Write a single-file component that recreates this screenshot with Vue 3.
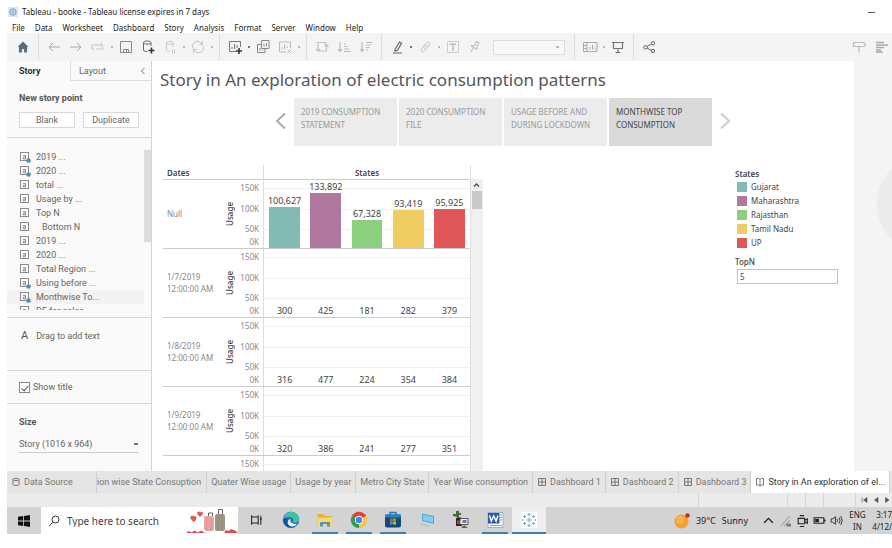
<script setup>
import { ref } from 'vue'

const menus = ['File', 'Data', 'Worksheet', 'Dashboard', 'Story', 'Analysis', 'Format', 'Server', 'Window', 'Help']

const sheets = [
  { name: '2019 ...', used: true },
  { name: '2020 ...', used: true },
  { name: 'total ...' },
  { name: 'Usage by ...' },
  { name: 'Top N' },
  { name: 'Bottom N', indent: true },
  { name: '2019 ...' },
  { name: '2020 ...' },
  { name: 'Total Region ...' },
  { name: 'Using before ...', used: true },
  { name: 'Monthwise To...', used: true },
  { name: 'DF for sales' },
]

const points = ['2019 CONSUMPTION STATEMENT', '2020 CONSUMPTION FILE', 'USAGE BEFORE AND DURING LOCKDOWN', 'MONTHWISE TOP CONSUMPTION']
const activePoint = ref(3)

const states = [
  { name: 'Gujarat', color: '#84bab4' },
  { name: 'Maharashtra', color: '#b0779f' },
  { name: 'Rajasthan', color: '#8bd07e' },
  { name: 'Tamil Nadu', color: '#f0cd63' },
  { name: 'UP', color: '#e05759' },
]

const rows = [
  { date: ['Null'], values: [100627, 133892, 67328, 93419, 95925] },
  { date: ['1/7/2019', '12:00:00 AM'], values: [300, 425, 181, 282, 379] },
  { date: ['1/8/2019', '12:00:00 AM'], values: [316, 477, 224, 354, 384] },
  { date: ['1/9/2019', '12:00:00 AM'], values: [320, 386, 241, 277, 351] },
  { date: [], values: [] },
]
const ticks = ['150K', '100K', '50K', '0K']
const AXIS_MAX = 166000
const barHeight = (v) => (v / AXIS_MAX) * 100 + '%'

const topN = ref('5')
const showTitle = ref(true)

const tabs = [
  { name: 'ion wise State Consuption', cut: true },
  { name: 'Quater Wise usage' },
  { name: 'Usage by year' },
  { name: 'Metro City State' },
  { name: 'Year Wise consumption' },
  { name: 'Dashboard 1', icon: 'grid' },
  { name: 'Dashboard 2', icon: 'grid' },
  { name: 'Dashboard 3', icon: 'grid' },
  { name: 'Story in An exploration of el...', icon: 'book', active: true },
]
</script>

<template>
  <div class="app">
    <header class="titlebar">
      <svg class="logo" viewBox="0 0 10 10"><rect width="10" height="10" fill="#dbe8f2" /><circle cx="5" cy="5" r="3.2" fill="none" stroke="#6f9cc0" /><path d="M5 2.500v5M2.500 5h5" stroke="#8fb2cd" /></svg>
      <span>Tableau - booke - Tableau license expires in 7 days</span>
      <button class="minimize" aria-label="Minimize"></button>
    </header>

    <nav class="menu">
      <button v-for="m in menus" :key="m">{{ m }}</button>
    </nav>

    <div class="toolbar">
      <button class="tool" aria-label="Start page"><svg viewBox="0 0 16 16"><path d="M8 2.500 2.500 8h1.400v5.500h3v-3.500h2.200v3.500h3V8h1.400z" fill="#5b6b7a" /></svg></button>
      <i class="sep"></i>
      <button class="tool" aria-label="Undo"><svg viewBox="0 0 16 16"><path d="M14 8H3M7 4 3 8l4 4" stroke="#aaa" /></svg></button>
      <button class="tool" aria-label="Redo"><svg viewBox="0 0 16 16"><path d="M2 8h11M9 4l4 4-4 4" stroke="#aaa" /></svg></button>
      <button class="tool" aria-label="Replay"><svg viewBox="0 0 16 16"><path d="M4 10H2V6h11M11 4l2 2-2 2M6 10h7V8" stroke="#c4c4c4" /></svg></button>
      <i class="caret"></i>
      <button class="tool" aria-label="Save"><svg viewBox="0 0 16 16"><path d="M2.500 2.500h11v11h-11zM5.500 13.500v-3h5v3M8.500 11v2" stroke="#888" /></svg></button>
      <button class="tool" aria-label="New data source"><svg viewBox="0 0 16 16"><path d="M11 7V3.500C11 1.500 3.500 1.500 3.500 3.500V11c0 1 1.500 1.500 4 1.500M3.500 4c0 1.500 7.500 1.500 7.500 0" stroke="#666" /><path d="M11.500 8.500v6M8.500 11.500h6" stroke="#333" stroke-width="1.600" /></svg></button>
      <button class="tool" aria-label="Pause updates"><svg viewBox="0 0 16 16"><path d="M11 8V3.500C11 2 4.500 2 4.500 3.500V11c0 1 1.500 1.500 3.500 1.500M4.500 4c0 1.500 6.500 1.500 6.500 0M10.500 10.500v4M12.500 10.500v4" stroke="#c8c8c8" /></svg></button>
      <i class="caret"></i>
      <button class="tool" aria-label="Refresh"><svg viewBox="0 0 16 16"><path d="M3 9.500A5 5 0 0 1 12 5M13 6.500A5 5 0 0 1 4 11M12.500 2.500V5.500h-3M3.500 13.500v-3h3" stroke="#c4c4c4" /></svg></button>
      <i class="caret"></i>
      <i class="sep"></i>
      <button class="tool" aria-label="New worksheet"><svg viewBox="0 0 16 16"><path d="M9 12.500H2.500v-10h11V8M5 10V8M7.500 10V5M10 9V6" stroke="#777" /><path d="M12 9v6M9 12h6" stroke="#333" stroke-width="1.600" /></svg></button>
      <i class="caret dark"></i>
      <button class="tool" aria-label="Duplicate"><svg viewBox="0 0 16 16"><path d="M6.500 1.500h7.500v8H6.500zM6 5.500H2.500v8h7.500v-4M9 7.500V5M11.500 7.500V4M5 11.500V9M7.500 11.500v-1" stroke="#888" /></svg></button>
      <button class="tool" aria-label="Clear sheet"><svg viewBox="0 0 16 16"><path d="M9 13H2.500V3h11v6M5 10.500V8M7.500 10.500V5.500M10 9V7M10.500 10.500l4 4M14.500 10.500l-4 4" stroke="#bbb" /></svg></button>
      <i class="caret"></i>
      <i class="sep"></i>
      <button class="tool" aria-label="Swap"><svg viewBox="0 0 16 16"><path d="M4 12V3.500h7.500v2M12.500 6v6H4M2.500 3.500H4M2 10l2 2 2-2M10.500 7.500l2-2 2 2" stroke="#c2c2c2" stroke-width="1.200" /></svg></button>
      <button class="tool" aria-label="Sort ascending"><svg viewBox="0 0 16 16"><path d="M4 3v9M2 10l2 2.500L6 10M8 12.500h6.500M8 10h5M8 7.500h3.500M8 5h2" stroke="#bcbcbc" stroke-width="1.200" /></svg></button>
      <button class="tool" aria-label="Sort descending"><svg viewBox="0 0 16 16"><path d="M4 3v9M2 10l2 2.500L6 10M8 3.500h6.500M8 6h5M8 8.500h3.500M8 11h2" stroke="#bcbcbc" stroke-width="1.200" /></svg></button>
      <i class="sep"></i>
      <button class="tool" aria-label="Highlight"><svg viewBox="0 0 16 16"><path d="M6 10.500 10.500 3l2 1.200-4 7L6 12zM4 14h9" stroke="#666" stroke-width="1.200" /></svg></button>
      <i class="caret dark"></i>
      <button class="tool" aria-label="Group"><svg viewBox="0 0 16 16"><path d="M5 9l4.500-5c2-2 4.500 0 3 2L7.500 12c-1.500 1.800-4.500 0-3-2L9 5M7 10l3.500-4" stroke="#c6c6c6" /></svg></button>
      <i class="caret"></i>
      <button class="tool" aria-label="Show labels"><svg viewBox="0 0 16 16"><path d="M2.500 2.500h11v11h-11z" stroke="#ccc" /><path d="M5.500 6V5h5v1M8 5v6M7 11h2" stroke="#aaa" /></svg></button>
      <button class="tool" aria-label="Pin"><svg viewBox="0 0 16 16"><path d="M8.500 2.500l4 1.200M9.500 3 8 6.500l-4 .5 6 3.500 0-3L12 4M6.500 8.500 4 13" stroke="#b4b4b4" /></svg></button>
      <select class="fit" aria-label="Fit"><option></option></select>
      <i class="sep"></i>
      <button class="tool" aria-label="Show cards"><svg viewBox="0 0 16 16"><path d="M1.500 3.500h13.500v9H1.500zM5 3.500v9M1.500 6.500H5M1.500 9.500H5M8 10.500V8M10.500 10.500V6M13 10.500V8.500" stroke="#aaa" /></svg></button>
      <i class="caret"></i>
      <button class="tool" aria-label="Presentation mode"><svg viewBox="0 0 16 16"><path d="M2 3.500h12M3.500 3.500v6h9v-6M8 9.500v4M5.500 13.500h5" stroke="#777" stroke-width="1.200" /></svg></button>
      <i class="sep"></i>
      <button class="tool" aria-label="Share"><svg viewBox="0 0 16 16"><path d="M6 7.500 10.500 5M6 9l4.500 2.500" stroke="#666" /><circle cx="4.500" cy="8.300" r="1.800" stroke="#666" /><circle cx="12" cy="4.300" r="1.700" stroke="#666" /><circle cx="12" cy="12" r="1.700" stroke="#666" /></svg></button>
      <span class="grow"></span>
      <button class="tool" aria-label="Data guide"><svg viewBox="0 0 16 16"><path d="M4 3.500h9l1.500 2-1.500 2H2.500v-4zM8 7.500v6" stroke="#bbb" stroke-width="1.200" /></svg></button>
      <button class="tool" aria-label="Show me"><svg viewBox="0 0 16 16"><path d="M3 3.500h8M3 6h12M3 8.500h8M3 11h5M3 13h7" stroke="#aaa" stroke-width="1.500" /></svg></button>
    </div>

    <main class="main">
      <aside class="panel">
        <div class="panel-tabs">
          <button class="ptab on">Story</button>
          <button class="ptab">Layout <svg viewBox="0 0 6 8"><path d="M4.500 1 1.500 4l3 3" fill="none" stroke="#777" /></svg></button>
        </div>
        <section class="new-point">
          <h2>New story point</h2>
          <div class="pair">
            <button>Blank</button>
            <button>Duplicate</button>
          </div>
        </section>
        <section class="sheet-section">
          <ul class="sheets">
            <li v-for="(s, i) in sheets" :key="i" :class="{ hot: i === 10 }">
              <svg viewBox="0 0 12 12">
                <rect x="1.500" y="1.500" width="8" height="8" fill="#fff" stroke="#8a8a8a" />
                <path d="M4 4.500h2.500V8H4.200V6.200h2.300" fill="none" stroke="#777" stroke-width=".8" />
                <circle v-if="s.used" cx="9.500" cy="9.500" r="2.300" fill="#4a8fb0" />
              </svg>
              <span :class="{ indent: s.indent }">{{ s.name }}</span>
            </li>
          </ul>
          <div class="thumb"></div>
        </section>
        <section class="drag"><b>A</b><span>Drag to add text</span></section>
        <section class="show">
          <label><input v-model="showTitle" type="checkbox" /><span>Show title</span></label>
        </section>
        <section class="size">
          <h2><label for="size">Size</label></h2>
          <select id="size"><option>Story (1016 x 964)</option></select>
        </section>
      </aside>

      <article class="story">
        <h1>Story in An exploration of electric consumption patterns</h1>
        <nav class="points">
          <button class="arrow" aria-label="Previous"><svg viewBox="0 0 12 18"><path d="M10 1.500 2 9l8 7.500" stroke="#aaa" /></svg></button>
          <button v-for="(p, i) in points" :key="p" class="point" :class="{ on: i === activePoint }" @click="activePoint = i">{{ p }}</button>
          <button class="arrow" aria-label="Next"><svg viewBox="0 0 12 18"><path d="M2 1.500 10 9l-8 7.500" stroke="#ccc" /></svg></button>
        </nav>
        <div class="board">
          <div class="viz">
            <div class="chart">
              <div class="head"><b>Dates</b><b class="cols">States</b></div>
              <div v-for="(r, i) in rows" :key="i" class="row">
                <div class="date"><span v-for="d in r.date" :key="d">{{ d }}</span></div>
                <div class="axis-name"><span v-if="r.values.length">Usage</span></div>
                <div class="ticks"><span v-for="t in ticks.slice(0, r.values.length ? 4 : 1)" :key="t">{{ t }}</span></div>
                <div class="plot">
                  <div v-for="(v, j) in r.values" :key="j" class="cell">
                    <span>{{ v.toLocaleString('en-US') }}</span>
                    <div class="bar" :style="{ height: barHeight(v), background: v > 1000 ? states[j].color : 'transparent' }"></div>
                  </div>
                </div>
              </div>
            </div>
            <div class="vscroll"><svg viewBox="0 0 11 11"><path d="M3 7l2.500-2.500L8 7" fill="none" stroke="#555" stroke-width="1.500" /></svg><div></div></div>
          </div>
          <div class="legend">
            <b>States</b>
            <ul>
              <li v-for="s in states" :key="s.name"><i :style="{ background: s.color }"></i>{{ s.name }}</li>
            </ul>
            <label for="topn">TopN</label>
            <input id="topn" v-model="topN" type="text" />
          </div>
        </div>
      </article>
      <div class="gutter"><div class="bubble"></div></div>
    </main>

    <nav class="tabs">
      <button class="tab source"><svg viewBox="0 0 10 10"><path d="M2 2.500C2 1 8 1 8 2.500v5C8 9 2 9 2 7.500zC2 4 8 4 8 2.500" /></svg>Data Source</button>
      <button v-for="t in tabs" :key="t.name" class="tab" :class="{ on: t.active, cut: t.cut }">
        <svg v-if="t.icon === 'grid'" viewBox="0 0 10 10"><path d="M1.500 1.500h7v7h-7zM5 1.500v7M1.500 5h7" /></svg>
        <svg v-if="t.icon === 'book'" viewBox="0 0 10 10"><path d="M5 2.500 3.500 1.500h-2v6.500h2L5 9l1.500-1h2V1.500h-2L5 2.500V9" /></svg>
        {{ t.name }}
      </button>
    </nav>

    <div class="status">
      <i class="s1"></i><i></i><i></i><i class="s2"></i><i class="s3"></i>
      <svg viewBox="0 0 32 8"><path d="M2 1.500v5M7 1.500v5L3.500 4zM18 1.500v5L14.500 4zM25.500 1.500v5L29 4z" fill="#555" stroke="#555" stroke-width=".6" /></svg>
    </div>

    <footer class="taskbar">
      <button class="start" aria-label="Start"><svg viewBox="0 0 12 12"><path d="M0 1.800 5.200 1v4.600H0zM6 .9 12 0v5.600H6zM0 6.400h5.200V11L0 10.200zM6 6.400h6V12l-6-.9z" fill="#111" /></svg></button>
      <div class="search">
        <svg class="lens" viewBox="0 0 12 12"><circle cx="7.500" cy="4.500" r="3.500" fill="none" stroke="#333" /><path d="M5 7.200 1 11.200" stroke="#333" /></svg>
        <input type="text" placeholder="Type here to search" aria-label="Search" />
        <svg class="bags" viewBox="0 0 52 26">
          <path d="M8 14C3 11 4 7 6.500 8 7 7 8 7.500 8 8.500 10 6.500 12.500 10 8 14zM14 9c-4-3-3-6-1-5 1-1 2 0 2 .5C17 3 18.500 6 14 9z" fill="#e05a5a" />
          <path d="M22.500 8V5h4v3M32.500 6V1.500h4V6" fill="none" stroke="#666" />
          <rect x="18" y="8" width="10" height="15" rx="2" fill="#e9a3a0" /><rect x="29" y="6" width="10" height="17" rx="2" fill="#a19686" />
          <path d="M21 9v13M25 9v13" stroke="#dc918d" stroke-width=".8" /><path d="M32 7v15M36 7v15" stroke="#8e8475" stroke-width=".8" />
          <path d="M0 25l2.500-2 3 1.500 3-2 3 2 4-2 3 2.500zM38 25l2-3 3 1 2-2 4 1.500 3 2.500z" fill="#d84b50" />
        </svg>
      </div>
      <button class="app-btn view" aria-label="Task view"><svg viewBox="0 0 16 16"><path d="M3 4.500h7.500v7H3zM3 4.500v-2M10.500 4.500v-2M3 13.500v-2M10.500 13.500v-2M13.500 3v2.500M13.500 8v5.500" fill="none" stroke="#222" stroke-width="1.200" /><path d="M12.700 5.500h1.800V8h-1.800z" fill="#222" /></svg></button>
      <button class="app-btn" aria-label="Edge"><svg viewBox="0 0 18 18"><circle cx="9" cy="9" r="8.200" fill="#1c74c9" /><path d="M.9 9C1.500-1.500 16.800-1.200 17.200 8c0 3.500-4.500 4.500-6.500 3 1.500-1.500.5-5-3-5C4 6 1.200 7 .9 9z" fill="#3fc4a0" /><path d="M.9 9C1 3 6 .7 9.500.8 5 1.500 3 5 .9 9z" fill="#2ba8dd" /><path d="M8.500 8c-1 2 1 5.500 6.500 5-3 4-9 2.500-9.500-1C5.300 10 6.500 8.500 8.500 8z" fill="#f0f5f8" /><path d="M6 9c-2 4 2 8 6 7-6 2-11.500-2-10.500-8C3 6.500 5.500 7 6 9z" fill="#14529e" /></svg></button>
      <button class="app-btn run" aria-label="File Explorer"><svg viewBox="0 0 18 18"><path d="M1.500 3h6l1.500 2h7v9h-14.500z" fill="#e8b13c" /><path d="M1.500 6.500h15V14h-15z" fill="#f8d775" /><path d="M4 15.500V11h10v4.500h-3V13H7v2.500z" fill="#5b92b5" /></svg></button>
      <button class="app-btn run" aria-label="Chrome"><svg viewBox="0 0 18 18"><path d="M9 9 1.900 4.900A8.200 8.200 0 0 1 16.100 4.900z" fill="#db4437" /><path d="M9 9 16.100 4.900A8.200 8.200 0 0 1 9 17.200z" fill="#f7c53b" /><path d="M9 9v8.200A8.200 8.200 0 0 1 1.900 4.900z" fill="#2f9e54" /><circle cx="9" cy="9" r="4.200" fill="#fff" /><circle cx="9" cy="9" r="3.200" fill="#4484e4" /></svg></button>
      <button class="app-btn run" aria-label="Store"><svg viewBox="0 0 18 18"><path d="M6 4V1.500h6V4" fill="none" stroke="#2679b5" stroke-width="1.500" /><rect x="1" y="3.500" width="16" height="13" rx="2" fill="#154a73" /><path d="M1 3.500h16v3H1z" fill="#1c86c4" /><path d="M6 7.500h2.800v2.800H6z" fill="#d65a36" /><path d="M9.200 7.500H12v2.800H9.200z" fill="#7fae3c" /><path d="M6 10.700h2.800v2.800H6z" fill="#3b9cd9" /><path d="M9.200 10.700H12v2.800H9.200z" fill="#e7b838" /></svg></button>
      <button class="app-btn" aria-label="Remote desktop"><svg viewBox="0 0 18 18"><path d="M4 2.500 16 5v8L4 10z" fill="#4fa8dc" /><path d="M5 3.800 15 6v5.500L5 9.200z" fill="#86cdf2" /><path d="M3 12l9 2.500-2 1.500-8-2.500z" fill="#b9c3cb" /></svg></button>
      <button class="app-btn" aria-label="Tools"><svg viewBox="0 0 18 18"><path d="M4 0h3v2h2v2H7v2l3 1v1H5V6L1 5V3h3z" fill="#3f6d35" /><rect x="4" y="7" width="6" height="8" fill="#2a2a2a" /><path d="M8 7.500h8v6H8z" fill="#f2f2f2" stroke="#333" stroke-width=".8" /><path d="M10.500 9h4v3h-4z" fill="#7c6fb0" /><path d="M5 9.500h3v3.500H5z" fill="#c13a46" /><path d="M12 14l4 3H9z" fill="#8a5d3a" /></svg></button>
      <button class="app-btn run" aria-label="Word"><svg viewBox="0 0 18 18"><path d="M2 1.500h15v15H2z" fill="#f7f9fc" stroke="#8fa6c8" stroke-width=".8" /><path d="M14 4h2M14 6.500h2M14 9h2M4 14.500h12" stroke="#8ba3c9" /><path d="M2 2h11.500v10.500H2z" fill="#2c5ca8" /><path d="M3.500 4.500 5.300 10 7.700 5l2.400 5 1.900-5.500" fill="none" stroke="#fff" stroke-width="1.500" /></svg></button>
      <button class="app-btn run on" aria-label="Tableau"><svg viewBox="0 0 18 18"><rect x="1" y="1" width="16" height="16" fill="#fafcfd" /><path d="M9 6.500v5M6.500 9h5M9 2v3M7.500 3.500h3M9 13v3M7.500 14.500h3M4.500 4v3M3 5.500h3M13.500 4v3M12 5.500h3M4.500 11v3M3 12.500h3M13.500 11v3M12 12.500h3M2.500 8v2M15.500 8v2" stroke="#6aa3bf" stroke-width=".9" /></svg></button>
      <span class="grow"></span>
      <div class="weather"><svg viewBox="0 0 16 16"><circle cx="7.500" cy="8.500" r="7" fill="#f5a02c" /><circle cx="6" cy="7" r="4" fill="#f9b445" /><circle cx="13.500" cy="2.500" r="2.200" fill="#b5342a" /></svg><span>39°C</span><span>Sunny</span></div>
      <div class="tray">
        <svg viewBox="0 0 12 12"><path d="M2 8l4-4 4 4" stroke="#222" stroke-width="1.200" /></svg>
        <svg viewBox="0 0 12 12"><path d="M2 11 10 2M5 11l5-5M8 11l2-2" stroke="#aaa" stroke-width="1.200" /><path d="M7 9h4v2.500H7z" fill="#777" /></svg>
        <svg viewBox="0 0 12 12"><path d="M2 4h6v5H2zM8 6l2.500-1.500v4L8 7M3.500 1.500h4M3.500 11.500h4" stroke="#222" /></svg>
        <svg viewBox="0 0 12 12"><path d="M1 3.500h9v5H1zM11 5v2" stroke="#222" /><path d="M2 4.500h3.500v3H2z" fill="#222" /></svg>
        <svg viewBox="0 0 12 12"><path d="M1 4.500h1.500L5 2.500v7L2.500 7.500H1zM6.500 4.500q1 1.500 0 3M8.300 3.200q2 2.800 0 5.600M10 2q2.500 4 0 8" stroke="#333" stroke-width=".9" /></svg>
      </div>
      <div class="lang"><span>ENG</span><span>IN</span></div>
      <div class="clock"><span>3:17</span><span>4/12/</span></div>
    </footer>
  </div>
</template>

<style>
body {
  background: #fff;
}
</style>

<style scoped>
* {
  box-sizing: border-box;
}
.app {
  display: flex;
  flex-direction: column;
  height: 100vh;
  padding: 0 0 14px 7px;
  overflow: hidden;
  font-family: 'Noto Sans', sans-serif;
  font-size: 8px;
  line-height: 12px;
  color: #444;
}
button,
input,
select {
  font: inherit;
  color: inherit;
  background: none;
  border: 0;
  border-radius: 0;
  padding: 0;
  margin: 0;
  appearance: none;
}
ul {
  list-style: none;
  margin: 0;
  padding: 0;
}
h1,
h2 {
  margin: 0;
  font-weight: 400;
}
.grow {
  flex: 1;
}
.titlebar {
  display: flex;
  align-items: center;
  gap: 4px;
  flex: none;
  height: 22px;
  padding: 2px 17px 0 1px;
  color: #222;
}
.logo {
  width: 10px;
  height: 10px;
}
.minimize {
  width: 7px;
  height: 1px;
  margin-left: auto;
  background: #555;
}
.menu {
  display: flex;
  flex: none;
  gap: 10px;
  height: 11px;
  padding-left: 5px;
  color: #222;
}
.menu button {
  line-height: 11px;
}
.toolbar {
  display: flex;
  align-items: center;
  flex: none;
  height: 28px;
  padding-left: 5px;
  background: #f4f4f4;
}
.tool {
  flex: none;
  width: 22px;
  height: 20px;
  display: grid;
  place-items: center;
}
.tool svg {
  width: 16px;
  height: 16px;
  fill: none;
}
.sep {
  width: 1px;
  height: 26px;
  margin: 0 4px;
  background: #dedede;
}
.caret {
  width: 6px;
  height: 2px;
  border: solid transparent;
  border-width: 0 2px;
  background: #bbb content-box;
  background-clip: padding-box;
}
.caret.dark {
  background-color: #777;
}
.fit {
  width: 72px;
  height: 15px;
  margin: 0 5px 0 7px;
  border: 1px solid #ddd;
  background: #f8f8f8 linear-gradient(#bbb, #bbb) no-repeat right 5px center / 3px 2px;
}
.main {
  display: flex;
  flex: 1;
  min-height: 0;
  overflow: hidden;
}
.panel {
  display: flex;
  flex-direction: column;
  flex: none;
  width: 145px;
  background: #fafafa;
  border-right: 1px solid #d4d4d4;
  font-family: Roboto, sans-serif;
  font-size: 9px;
  color: #666;
}
.panel-tabs {
  display: flex;
  height: 20px;
}
.ptab {
  flex: 1;
  display: flex;
  align-items: center;
  justify-content: space-between;
  padding: 0 5px 0 8px;
  border: solid #dcdcdc;
  border-width: 0 0 1px 1px;
}
.ptab.on {
  flex: 0 0 63px;
  padding-left: 12px;
  border: 0;
  font-weight: 700;
  color: #333;
}
.ptab svg {
  width: 6px;
  height: 8px;
}
.panel h2 {
  font-size: 9px;
  font-weight: 700;
  color: #555;
}
.panel section {
  flex: none;
  border-bottom: 1px solid #d8d8d8;
}
.new-point {
  height: 57px;
  padding: 11px 12px 0;
}
.pair {
  display: flex;
  gap: 8px;
  margin-top: 8px;
}
.pair button {
  flex: 1;
  height: 16px;
  border: 1px solid #d8d8d8;
  background: #fff;
}
.panel .sheet-section {
  display: flex;
  height: 180px;
  padding: 12px 0 7px;
}
.sheets {
  flex: 1;
  overflow: hidden;
}
.sheets li {
  display: flex;
  align-items: center;
  gap: 5px;
  height: 14px;
  padding-left: 12px;
}
.sheets li.hot {
  background: #f3f3f3;
}
.sheets svg {
  width: 12px;
  height: 12px;
}
.indent {
  padding-left: 6px;
}
.thumb {
  width: 7px;
  height: 92px;
  background: #dcdcdc;
}
.drag {
  display: flex;
  gap: 8px;
  height: 53px;
  padding: 12px 14px 0;
}
.drag b {
  font-size: 11px;
  font-weight: 400;
  color: #555;
}
.show {
  height: 33px;
  padding: 10px 12px;
}
.show label {
  display: flex;
  align-items: center;
  gap: 3px;
}
.show input {
  width: 11px;
  height: 11px;
  border: 1px solid #888;
  background: #fff;
  display: grid;
  place-items: center;
}
.show input:checked::before {
  content: '';
  width: 3px;
  height: 6px;
  border: solid #555;
  border-width: 0 1px 1px 0;
  transform: rotate(40deg);
}
.panel .size {
  flex: 1;
  border: 0;
  padding: 12px;
}
.size select {
  display: block;
  width: 100%;
  height: 18px;
  margin-top: 7px;
  border-bottom: 1px solid #ccc;
  background: linear-gradient(#777, #777) no-repeat right 1px center / 4px 2px;
}
.story {
  flex: 1;
  min-width: 0;
  display: flex;
  flex-direction: column;
  background: #fff;
}
h1 {
  padding: 7px 8px 0;
  font-size: 17px;
  line-height: 24px;
  color: #555;
}
.points {
  display: flex;
  justify-content: center;
  gap: 2px;
  margin-top: 6px;
}
.point {
  width: 103px;
  height: 48px;
  padding: 7px;
  display: flex;
  text-align: left;
  line-height: 13px;
  background: #ececec;
  color: #999;
}
.point.on {
  background: #dadada;
  color: #444;
}
.arrow {
  width: 22px;
}
.arrow svg {
  width: 12px;
  height: 18px;
  fill: none;
  stroke-width: 2;
}
.board {
  flex: 1;
  min-height: 0;
  display: flex;
  justify-content: space-between;
  align-items: flex-start;
  padding: 19px 16px 0 11px;
}
.viz {
  display: flex;
  align-self: stretch;
  width: 320px;
}
.chart {
  flex: 1;
  overflow: hidden;
  border-right: 1px solid #e0e0e0;
}
.head,
.row {
  display: grid;
  border-bottom: 1px solid #ccc;
}
.head {
  height: 15px;
  line-height: 16px;
  padding-left: 4px;
  grid-template-columns: 96px 1fr;
  font-weight: 600;
}
.head b,
.legend b {
  font-weight: 600;
}
.cols {
  text-align: center;
  border-left: 1px solid #ddd;
}
.row {
  grid-template-columns: 61px 12px 27px 1fr;
  height: 69px;
  color: #888;
}
.date {
  display: flex;
  flex-direction: column;
  justify-content: center;
  padding-left: 4px;
  white-space: nowrap;
}
.axis-name {
  display: grid;
  place-items: center;
  color: #444;
}
.axis-name span {
  writing-mode: vertical-rl;
  transform: rotate(180deg);
  font-weight: 500;
}
.ticks {
  display: grid;
  grid-template-rows: 16px 26px 14px 12px;
  align-items: center;
  justify-items: end;
  padding-right: 4px;
}
.plot {
  display: flex;
  border-left: 1px solid #ddd;
  background:
    linear-gradient(#f0f0f0, #f0f0f0) 0 8px / 100% 1px no-repeat,
    linear-gradient(#f0f0f0, #f0f0f0) 0 29px / 100% 1px no-repeat,
    linear-gradient(#f0f0f0, #f0f0f0) 0 49px / 100% 1px no-repeat;
}
.cell {
  flex: 1;
  min-width: 0;
  height: 68px;
  display: flex;
  flex-direction: column;
  align-items: center;
  justify-content: flex-end;
  font-size: 9px;
  color: #444;
}
.bar {
  width: 75%;
}
.vscroll {
  width: 12px;
  margin-top: 14px;
  background: #f0f0f0;
}
.vscroll svg {
  display: block;
  width: 11px;
  height: 12px;
}
.vscroll div {
  height: 18px;
  margin: 0 1px;
  background: #c9c9c9;
}
.legend {
  width: 103px;
  padding-top: 3px;
}
.legend b,
.legend label {
  display: block;
}
.legend li {
  display: flex;
  align-items: center;
  gap: 4px;
  height: 14px;
  padding-left: 2px;
}
.legend i {
  width: 10px;
  height: 10px;
}
.legend label {
  margin-top: 6px;
  font-weight: 500;
}
.legend input {
  display: block;
  width: 101px;
  height: 15px;
  margin: 1px 0 0 2px;
  padding-left: 2px;
  border: 1px solid #c4c4c4;
}
.gutter {
  position: relative;
  flex: none;
  width: 38px;
  background: #f4f4f4;
  overflow: hidden;
}
.bubble {
  position: absolute;
  left: 23px;
  top: 93px;
  width: 100px;
  height: 100px;
  border-radius: 50%;
  background: #ebebeb;
}
.tabs {
  display: flex;
  flex: none;
  height: 22px;
  background: #e5e5e5;
  overflow: hidden;
  font-family: Roboto, sans-serif;
  font-size: 9px;
  color: #777;
}
.tab {
  display: flex;
  align-items: center;
  flex: none;
  gap: 3px;
  padding: 0 4px;
  white-space: nowrap;
  border-right: 1px solid #d0d0d0;
}
.tab svg {
  width: 10px;
  height: 10px;
  fill: none;
  stroke: #777;
}
.tab.source {
  width: 90px;
}
.tab.cut {
  padding: 0 5px 0 0;
}
.tab.on {
  background: #fff;
  color: #333;
}
.status {
  display: flex;
  align-items: center;
  justify-content: flex-end;
  flex: none;
  height: 14px;
  background: #ebebeb;
}
.status i {
  width: 1px;
  height: 14px;
  margin-right: 17px;
  background: #d6d6d6;
}
.status .s1 {
  margin-right: 88px;
}
.status .s2 {
  margin-right: 31px;
}
.status .s3 {
  margin-right: 4px;
}
.status svg {
  width: 32px;
  height: 8px;
}
.taskbar {
  display: flex;
  align-items: stretch;
  flex: none;
  height: 27px;
  background: #d3d3d3;
  color: #222;
  font-size: 9px;
  overflow: hidden;
}
.start {
  width: 34px;
  display: grid;
  place-items: center;
}
.start svg {
  width: 12px;
  height: 12px;
}
.search {
  display: flex;
  align-items: center;
  width: 197px;
  padding-left: 7px;
  background: #fff;
}
.lens {
  width: 12px;
  height: 12px;
  margin-right: 7px;
}
.search input {
  flex: 1;
  min-width: 0;
  font-size: 10px;
}
.search input::placeholder {
  color: #444;
  opacity: 1;
}
.bags {
  width: 52px;
  height: 26px;
}
.app-btn {
  flex: none;
  width: 34px;
  display: grid;
  place-items: center;
  border-bottom: 2px solid transparent;
}
.app-btn svg {
  width: 18px;
  height: 18px;
}
.app-btn.view {
  width: 36px;
}
.app-btn.view svg {
  width: 14px;
  height: 14px;
}
.app-btn.run {
  background: linear-gradient(#3c7fb5, #3c7fb5) no-repeat center bottom / 26px 2px border-box;
}
.app-btn.run.on {
  background: #eeeeee;
  border-color: #3c7fb5;
}
.weather {
  display: flex;
  align-items: center;
  gap: 6px;
  margin-right: 14px;
}
.weather svg {
  width: 16px;
  height: 16px;
}
.tray {
  display: flex;
  align-items: center;
  gap: 4px;
}
.tray svg {
  width: 13px;
  height: 13px;
  fill: none;
}
.lang,
.clock {
  display: flex;
  flex-direction: column;
  justify-content: center;
  text-align: center;
  font-size: 8px;
}
.lang {
  width: 29px;
}
.clock {
  width: 20px;
  text-align: right;
}
</style>
